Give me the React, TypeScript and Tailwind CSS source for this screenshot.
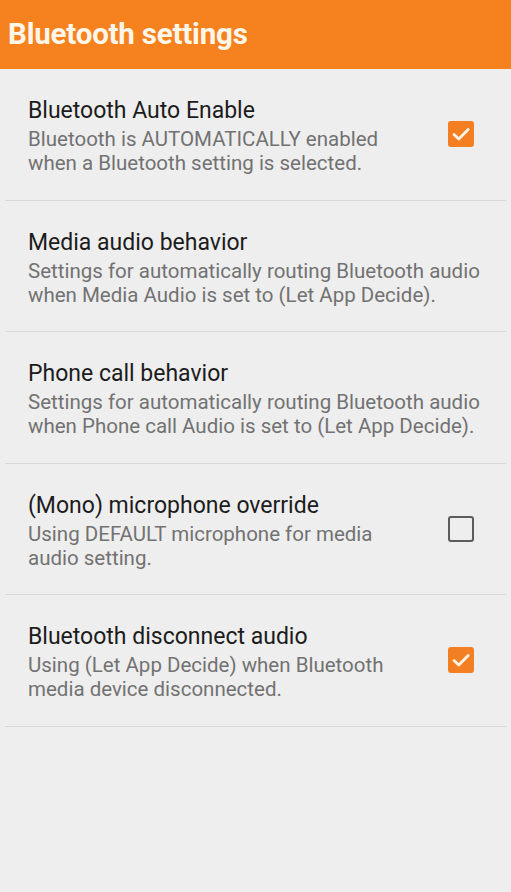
import React from "react";

type Setting = {
  title: string;
  summary: string;
  checked?: boolean;
};

const settings: Setting[] = [
  {
    title: "Bluetooth Auto Enable",
    summary: "Bluetooth is AUTOMATICALLY enabled when a Bluetooth setting is selected.",
    checked: true,
  },
  {
    title: "Media audio behavior",
    summary:
      "Settings for automatically routing Bluetooth audio when Media Audio is set to (Let App Decide).",
  },
  {
    title: "Phone call behavior",
    summary:
      "Settings for automatically routing Bluetooth audio when Phone call Audio is set to (Let App Decide).",
  },
  {
    title: "(Mono) microphone override",
    summary: "Using DEFAULT microphone for media audio setting.",
    checked: false,
  },
  {
    title: "Bluetooth disconnect audio",
    summary: "Using (Let App Decide) when Bluetooth media device disconnected.",
    checked: true,
  },
];

function CheckBox({ checked }: { checked: boolean }) {
  if (checked) {
    return (
      <div className="h-[26px] w-[26px] rounded-[3px] bg-[#f47f22]">
        <svg width="26" height="26" viewBox="0 0 26 26" fill="none">
          <path
            d="M6 13.5l4.8 4.6 9.4-9.6"
            stroke="#fff3e6"
            strokeWidth="2.8"
            strokeLinecap="round"
            strokeLinejoin="round"
          />
        </svg>
      </div>
    );
  }
  return <div className="h-[26px] w-[26px] rounded-[3px] border-[2.5px] border-[#5c5c5c]" />;
}

export default function App() {
  return (
    <div className="min-h-[892px] w-full bg-[#eeeeee] font-['Roboto',sans-serif]">
      <header className="flex h-[69px] items-center bg-[#f5821f] px-2">
        <h1 className="text-[29.5px] font-bold tracking-[-0.2px] text-[#fff6ea]">
          Bluetooth settings
        </h1>
      </header>

      <div className="mx-[5px]">
        {settings.map((s) => (
          <div
            key={s.title}
            className="flex h-[131.5px] items-center border-b border-[#d8d8d8] pl-[23px] pr-[14px]"
          >
            <div className="min-w-0 flex-1 pt-[4px]">
              <div className="text-[23px] leading-[28px] text-[#1c1c1c]">{s.title}</div>
              <div className="mt-[2px] text-[20.5px] leading-[24px] text-[#727272]">
                {s.summary}
              </div>
            </div>
            {s.checked !== undefined && (
              <div className="flex w-[80px] shrink-0 justify-end pr-[18px]">
                <CheckBox checked={s.checked} />
              </div>
            )}
          </div>
        ))}
      </div>
    </div>
  );
}
